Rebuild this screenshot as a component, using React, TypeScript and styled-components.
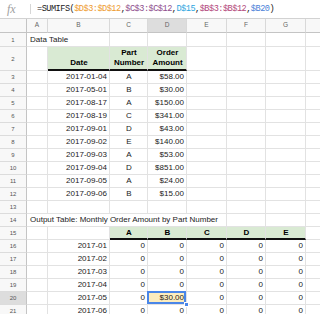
import React from 'react';
import styled, { createGlobalStyle, css } from 'styled-components';

const Global = createGlobalStyle`
  html, body { margin: 0; padding: 0; background: #fff; }
  body { font-family: "Liberation Sans", Arial, sans-serif; }
`;

const Page = styled.div`
  width: 320px;
  height: 314px;
  overflow: hidden;
  background: #fff;
`;

const FormulaBar = styled.div`
  height: 19px;
  box-sizing: border-box;
  border-bottom: 1px solid #d2d2d2;
  display: flex;
  align-items: center;
  padding-left: 7px;
`;

const Fx = styled.span`
  width: 16px;
  font-family: "Liberation Serif", "Times New Roman", serif;
  font-style: italic;
  font-size: 12px;
  color: #9e9e9e;
  line-height: 1;
`;

const Divider = styled.span`
  width: 1px;
  height: 10px;
  background: #d6d6d6;
  margin-left: 7px;
`;

const Formula = styled.span`
  margin-left: 6px;
  font-family: "Liberation Mono", "Courier New", monospace;
  font-size: 8.6px;
  letter-spacing: -0.51px;
  color: #222;
  white-space: nowrap;
  line-height: 1;
`;

const Ref = styled.span<{ $color: string }>`
  color: ${(p) => p.$color};
`;

const Grid = styled.div`
  display: grid;
  width: 360px;
  grid-template-columns: 27px 21px 62px 38px 39px 40px 39px 40px 54px;
  grid-template-rows: 14px 14px 24px repeat(19, 13px);
`;

const Corner = styled.div`
  background: #f8f8f8;
  box-sizing: border-box;
  border-right: 1px solid #c4c4c4;
  border-bottom: 1px solid #c4c4c4;
`;

const ColHeader = styled.div<{ $active?: boolean }>`
  background: ${(p) => (p.$active ? '#dddddd' : '#f8f8f8')};
  box-sizing: border-box;
  border-right: 1px solid #d9d9d9;
  border-bottom: 1px solid #c4c4c4;
  display: flex;
  align-items: center;
  justify-content: center;
  font-size: 6.5px;
  color: #666;
  line-height: 1;
`;

const RowHeader = styled.div<{ $active?: boolean }>`
  background: ${(p) => (p.$active ? '#dddddd' : '#f8f8f8')};
  box-sizing: border-box;
  border-right: 1px solid #c4c4c4;
  border-bottom: 1px solid #dcdcdc;
  display: flex;
  align-items: center;
  justify-content: center;
  font-size: 6px;
  color: #555;
  line-height: 1;
`;

type Align = 'left' | 'center' | 'right';

const justify = { left: 'flex-start', center: 'center', right: 'flex-end' };

const Cell = styled.div<{
  $align: Align;
  $green?: boolean;
  $bold?: boolean;
  $thick?: boolean;
  $span?: number;
  $selected?: boolean;
  $bottom?: boolean;
}>`
  position: relative;
  box-sizing: border-box;
  grid-column: span ${(p) => p.$span ?? 1};
  border-right: 1px solid #e2e2e2;
  border-bottom: ${(p) => (p.$thick ? '2px solid #111' : '1px solid #e2e2e2')};
  background: ${(p) => (p.$selected ? '#fcecbe' : p.$green ? '#d9ead3' : 'transparent')};
  display: flex;
  align-items: ${(p) => (p.$bottom ? 'flex-end' : 'center')};
  justify-content: ${(p) => justify[p.$align]};
  text-align: ${(p) => p.$align};
  padding: 0 2px 0 3px;
  padding-bottom: ${(p) => (p.$bottom ? '1px' : '0')};
  font-size: 8px;
  line-height: ${(p) => (p.$bottom ? '10px' : '1')};
  font-weight: ${(p) => (p.$bold ? 700 : 400)};
  color: ${(p) => (p.$bold ? '#000' : '#222')};
  white-space: pre;
  overflow: visible;
  ${(p) =>
    p.$selected &&
    css`
      &::before {
        content: '';
        position: absolute;
        left: -1px;
        top: -1px;
        right: 0;
        bottom: 0;
        border: 2px solid #4a86e8;
      }
      &::after {
        content: '';
        position: absolute;
        right: -3px;
        bottom: -3px;
        width: 5px;
        height: 5px;
        background: #4a86e8;
        border: 1px solid #fff;
        box-sizing: border-box;
        z-index: 2;
      }
    `}
`;

type Spec = {
  text?: string;
  align?: Align;
  green?: boolean;
  bold?: boolean;
  thick?: boolean;
  span?: number;
  selected?: boolean;
  bottom?: boolean;
};

const COLS = ['A', 'B', 'C', 'D', 'E', 'F', 'G', 'H'];

const data: [string, string, string][] = [
  ['2017-01-04', 'A', '$58.00'],
  ['2017-05-01', 'B', '$30.00'],
  ['2017-08-17', 'A', '$150.00'],
  ['2017-08-19', 'C', '$341.00'],
  ['2017-09-01', 'D', '$43.00'],
  ['2017-09-02', 'E', '$140.00'],
  ['2017-09-03', 'A', '$53.00'],
  ['2017-09-04', 'D', '$851.00'],
  ['2017-09-05', 'A', '$24.00'],
  ['2017-09-06', 'B', '$15.00'],
];

const empty = (n: number): Spec[] => Array.from({ length: n }, () => ({}));

function buildRows(): Spec[][] {
  const rows: Spec[][] = [];
  rows.push([{ text: 'Data Table', align: 'left', span: 2 }, ...empty(6)]);
  const hdr = { green: true, bold: true, thick: true, align: 'center' as Align, bottom: true };
  rows.push([{}, { ...hdr, text: 'Date' }, { ...hdr, text: 'Part\nNumber' }, { ...hdr, text: 'Order\nAmount' }, ...empty(4)]);
  data.forEach(([d, p, a]) => {
    rows.push([{}, { text: d, align: 'right' }, { text: p, align: 'center' }, { text: a, align: 'right' }, ...empty(4)]);
  });
  rows.push(empty(8));
  rows.push([{ text: 'Output Table: Monthly Order Amount by Part Number', align: 'left', span: 5 }, ...empty(3)]);
  const oh = { green: true, bold: true, thick: true, align: 'center' as Align };
  rows.push([{}, {}, ...['A', 'B', 'C', 'D', 'E'].map((t) => ({ ...oh, text: t })), {}]);
  for (let m = 1; m <= 6; m++) {
    const row: Spec[] = [{}, { text: `2017-0${m}`, align: 'right' }];
    for (let c = 0; c < 5; c++) {
      if (m === 5 && c === 1) row.push({ text: '$30.00', align: 'right', selected: true });
      else row.push({ text: '0', align: 'right' });
    }
    row.push({});
    rows.push(row);
  }
  return rows;
}

export default function App() {
  const rows = buildRows();
  return (
    <Page>
      <Global />
      <FormulaBar>
        <Fx>fx</Fx>
        <Divider />
        <Formula>
          =SUMIFS(<Ref $color="#ee9a2e">$D$3:$D$12</Ref>,<Ref $color="#8e4d8c">$C$3:$C$12</Ref>,
          <Ref $color="#2ba5e0">D$15</Ref>,<Ref $color="#b2477a">$B$3:$B$12</Ref>,
          <Ref $color="#4a7fd8">$B20</Ref>)
        </Formula>
      </FormulaBar>
      <Grid>
        <Corner />
        {COLS.map((c) => (
          <ColHeader key={c} $active={c === 'D'}>
            {c}
          </ColHeader>
        ))}
        {rows.map((cells, i) => (
          <React.Fragment key={i}>
            <RowHeader $active={i + 1 === 20}>{i + 1}</RowHeader>
            {cells.map((s, j) => (
              <Cell
                key={j}
                $align={s.align ?? 'left'}
                $green={s.green}
                $bold={s.bold}
                $thick={s.thick}
                $span={s.span}
                $selected={s.selected}
                $bottom={s.bottom}
              >
                {s.text}
              </Cell>
            ))}
          </React.Fragment>
        ))}
      </Grid>
    </Page>
  );
}
